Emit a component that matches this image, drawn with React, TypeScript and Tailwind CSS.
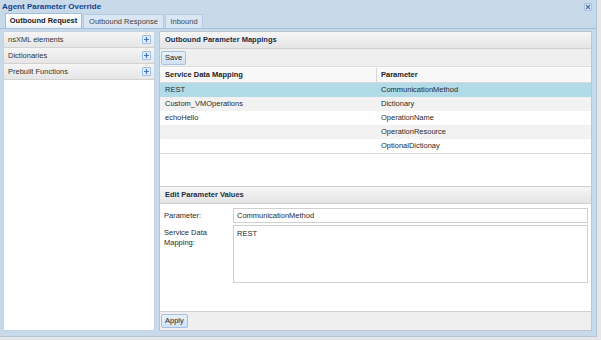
const font = "font-['Liberation_Sans',Arial,sans-serif]";

const Plus = () => (
    <div className="w-[9px] h-[9px] border border-[#9fbde0] bg-[#e3eefa] rounded-[1px] flex items-center justify-center">
        <svg width="7" height="7" viewBox="0 0 7 7">
            <path d="M3.5 1v5M1 3.5h5" stroke="#3d74c4" strokeWidth="1.2"/>
        </svg>
    </div>
)

const PanelHead = ({title}: {title: string}) => (
    <div className="h-[17px] shrink-0 flex items-center px-[5px] bg-gradient-to-b from-[#f6f6f6] to-[#e4e4e4] border-b border-[#d0d0d0] text-[7.5px] font-bold text-[#1b2c44]">
        {title}
    </div>
)

const Btn = ({label}: {label: string}) => (
    <div className="h-[14px] px-[3px] flex items-center bg-gradient-to-b from-[#e8f1fb] to-[#d0e1f3] border border-[#a6c1e0] rounded-[2px] text-[7.5px] text-[#222]">
        {label}
    </div>
)

const rows = [
    {a: "REST", b: "CommunicationMethod"},
    {a: "Custom_VMOperations", b: "Dictionary"},
    {a: "echoHello", b: "OperationName"},
    {a: "", b: "OperationResource"},
    {a: "", b: "OptionalDictionay"},
]

const App = () => {
    return (
        <div className={`w-[601px] h-[340px] bg-[#e6e6e6] overflow-hidden ${font}`}>
            <div className="w-[597px] h-[337px] bg-[#c8d9ea] border-r border-b border-[#b0c6dc] flex flex-col">
                {/* title */}
                <div className="h-[13px] shrink-0 flex items-center justify-between pl-[2px] pr-[4px]">
                    <div className="text-[8px] font-bold text-[#15428b]">Agent Parameter Override</div>
                    <div className="w-[8px] h-[8px] bg-[#dfe9f5] border border-[#a9c2e0] flex items-center justify-center">
                        <svg width="6" height="6" viewBox="0 0 6 6">
                            <path d="M1 1l4 4M5 1l-4 4" stroke="#4a72b0" strokeWidth="1.3"/>
                        </svg>
                    </div>
                </div>
                {/* tabs */}
                <div className="h-[16px] shrink-0 flex items-end gap-[1px] pl-[5px] border-b border-[#a3bfdf]">
                    <div className="w-[77px] h-[15px] flex items-center justify-center bg-gradient-to-b from-[#ffffff] to-[#eef2f7] border border-b-0 border-[#a3bfdf] text-[7.5px] font-bold text-[#1a1a1a]">
                        Outbound Request
                    </div>
                    <div className="w-[81px] h-[14px] flex items-center justify-center bg-[#d9e6f3] border border-b-0 border-[#b2cae4] text-[7.5px] text-[#444]">
                        Outbound Response
                    </div>
                    <div className="w-[38px] h-[14px] flex items-center justify-center bg-[#d9e6f3] border border-b-0 border-[#b2cae4] text-[7.5px] text-[#444]">
                        Inbound
                    </div>
                </div>
                {/* body */}
                <div className="flex-1 flex gap-[4px] pl-[3px] pr-[4px] pt-[2px] pb-[5px] min-h-0">
                    <div className="w-[152px] shrink-0 bg-white border border-[#c2d3e6] flex flex-col">
                        {["nsXML elements", "Dictionaries", "Prebuilt Functions"].map(t => (
                            <div key={t} className="h-[16px] flex items-center justify-between pl-[4px] pr-[3px] bg-gradient-to-b from-[#f5f5f5] to-[#e6e6e6] border-b border-[#d2d2d2] text-[7.5px] text-[#333]">
                                <span>{t}</span>
                                <Plus/>
                            </div>
                        ))}
                    </div>
                    <div className="flex-1 bg-white border border-[#b9c6d4] flex flex-col">
                        <div className="h-[153px] shrink-0 flex flex-col">
                            <PanelHead title="Outbound Parameter Mappings"/>
                            <div className="h-[18px] flex items-center px-[1px] bg-[#efefef] border-b border-[#dedede]">
                                <Btn label="Save"/>
                            </div>
                            <div className="mt-[1px] border-b border-[#d6d6d6]">
                                <div className="h-[15px] flex items-center bg-[#f8f8f8] border-b border-[#d8d8d8] text-[7.5px] font-bold text-[#222]">
                                    <div className="w-[217px] pl-[5px] border-r border-[#d8d8d8] h-full flex items-center">Service Data Mapping</div>
                                    <div className="pl-[4px]">Parameter</div>
                                </div>
                                {rows.map((r, i) => (
                                    <div key={r.b} className={`h-[14px] flex items-center text-[7.5px] text-[#2a2a2a] ${i === 0 ? "bg-[#b1dbe6]" : i % 2 ? "bg-[#f2f2f2]" : "bg-white"}`}>
                                        <div className="w-[217px] pl-[5px]">{r.a}</div>
                                        <div className="pl-[4px]">{r.b}</div>
                                    </div>
                                ))}
                            </div>
                        </div>
                        <div className="flex-1 flex flex-col border-t border-[#d0d0d0] mt-[1px]">
                            <PanelHead title="Edit Parameter Values"/>
                            <div className="flex-1 pt-[4px] pr-[3px] flex flex-col gap-[2px] text-[7.5px] text-[#2a2a2a]">
                                <div className="flex items-center">
                                    <div className="w-[73px] pl-[4px]">Parameter:</div>
                                    <div className="flex-1 h-[15px] border border-[#cfcfcf] flex items-center pl-[3px]">CommunicationMethod</div>
                                </div>
                                <div className="flex">
                                    <div className="w-[73px] pl-[4px] pt-[3px] leading-[10px]">Service Data<br/>Mapping:</div>
                                    <div className="flex-1 h-[58px] border border-[#cfcfcf] pl-[3px] pt-[2px]">REST</div>
                                </div>
                            </div>
                            <div className="h-[19px] flex items-center px-[1px] bg-[#efefef] border-t border-[#d0d0d0]">
                                <Btn label="Apply"/>
                            </div>
                        </div>
                    </div>
                </div>
            </div>
        </div>
    )
}

export default App
